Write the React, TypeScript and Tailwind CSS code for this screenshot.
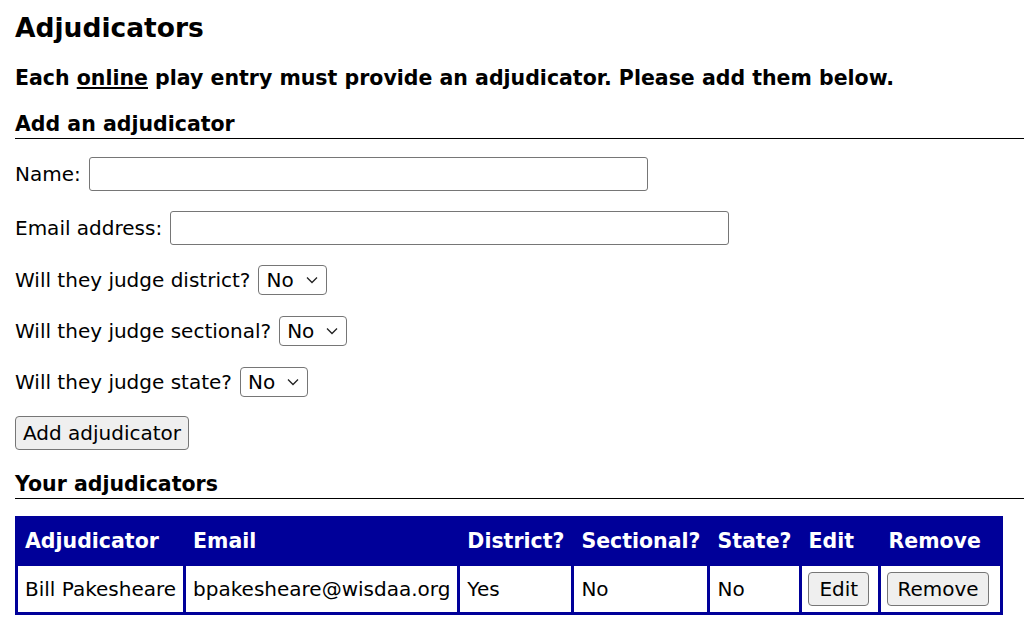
import React from "react";

function Chevron() {
  return (
    <svg width="12" height="8" viewBox="0 0 12 8" className="ml-[12px]" fill="none">
      <path d="M1 1.5 L6 6.5 L11 1.5" stroke="#222" strokeWidth="1.3" />
    </svg>
  );
}

function FakeSelect() {
  return (
    <div className="ml-[8px] inline-flex h-[30px] items-center rounded-[4px] border border-[#767676] bg-white pl-[7px] pr-[8px] text-[20px] leading-none">
      <span>No</span>
      <Chevron />
    </div>
  );
}

export default function App() {
  const font = "font-['DejaVu_Sans',sans-serif]";
  return (
    <div className={`${font} bg-white px-[15px] text-[20px] leading-[24px] text-black min-h-[632px]`}>
      <h1 className="pt-[12px] text-[26.5px] font-bold leading-[32px]">Adjudicators</h1>
      <p className="mt-[22px] text-[20.5px] font-bold">
        Each <span className="underline">online</span> play entry must provide an adjudicator. Please add them below.
      </p>
      <h3 className="mt-[22px] -mr-[15px] border-b-[1.5px] border-black pb-[2px] text-[20.5px] font-bold">Add an adjudicator</h3>

      <div className="mt-[18px] flex h-[34px] items-center">
        <span>Name:</span>
        <div className="ml-[8px] h-[34px] w-[559px] rounded-[3px] border border-[#767676] bg-white" />
      </div>
      <div className="mt-[20px] flex h-[34px] items-center">
        <span>Email address:</span>
        <div className="ml-[8px] h-[34px] w-[559px] rounded-[3px] border border-[#767676] bg-white" />
      </div>
      <div className="mt-[20px] flex h-[30px] items-center">
        <span>Will they judge district?</span>
        <FakeSelect />
      </div>
      <div className="mt-[21px] flex h-[30px] items-center">
        <span>Will they judge sectional?</span>
        <FakeSelect />
      </div>
      <div className="mt-[21px] flex h-[30px] items-center">
        <span>Will they judge state?</span>
        <FakeSelect />
      </div>
      <div className="mt-[19px] flex">
        <button className="h-[34px] rounded-[4px] border border-[#767676] bg-[#efefef] px-[7px] text-[20px]">
          Add adjudicator
        </button>
      </div>
      <h3 className="mt-[22px] -mr-[15px] border-b-[1.5px] border-black pb-[2px] text-[20.5px] font-bold">Your adjudicators</h3>

      <table className="mt-[17px] border-separate border-spacing-[3px] bg-[#000099] text-left">
        <thead>
          <tr className="text-white">
            <th className="w-[165px] px-[7px] py-[10px] text-[20.5px] font-bold">Adjudicator</th>
            <th className="w-[271px] px-[7px] py-[10px] text-[20.5px] font-bold">Email</th>
            <th className="w-[110px] px-[7px] py-[10px] text-[20.5px] font-bold">District?</th>
            <th className="w-[131px] px-[7px] py-[10px] text-[20.5px] font-bold">Sectional?</th>
            <th className="w-[89px] px-[7px] py-[10px] text-[20.5px] font-bold">State?</th>
            <th className="w-[76px] px-[6px] py-[10px] text-[20.5px] font-bold">Edit</th>
            <th className="w-[119px] px-[7px] py-[10px] text-[20.5px] font-bold">Remove</th>
          </tr>
        </thead>
        <tbody>
          <tr className="bg-white">
            <td className="px-[7px] py-[6px] whitespace-nowrap">Bill Pakesheare</td>
            <td className="px-[7px] py-[6px] whitespace-nowrap">bpakesheare@wisdaa.org</td>
            <td className="px-[7px] py-[6px]">Yes</td>
            <td className="px-[7px] py-[6px]">No</td>
            <td className="px-[7px] py-[6px]">No</td>
            <td className="px-[6px] py-[6px]">
              <button className="h-[34px] rounded-[4px] border border-[#767676] bg-[#efefef] px-[10px] text-[20px]">Edit</button>
            </td>
            <td className="px-[6px] py-[6px]">
              <button className="h-[34px] rounded-[4px] border border-[#767676] bg-[#efefef] px-[9px] text-[20px]">Remove</button>
            </td>
          </tr>
        </tbody>
      </table>
    </div>
  );
}
